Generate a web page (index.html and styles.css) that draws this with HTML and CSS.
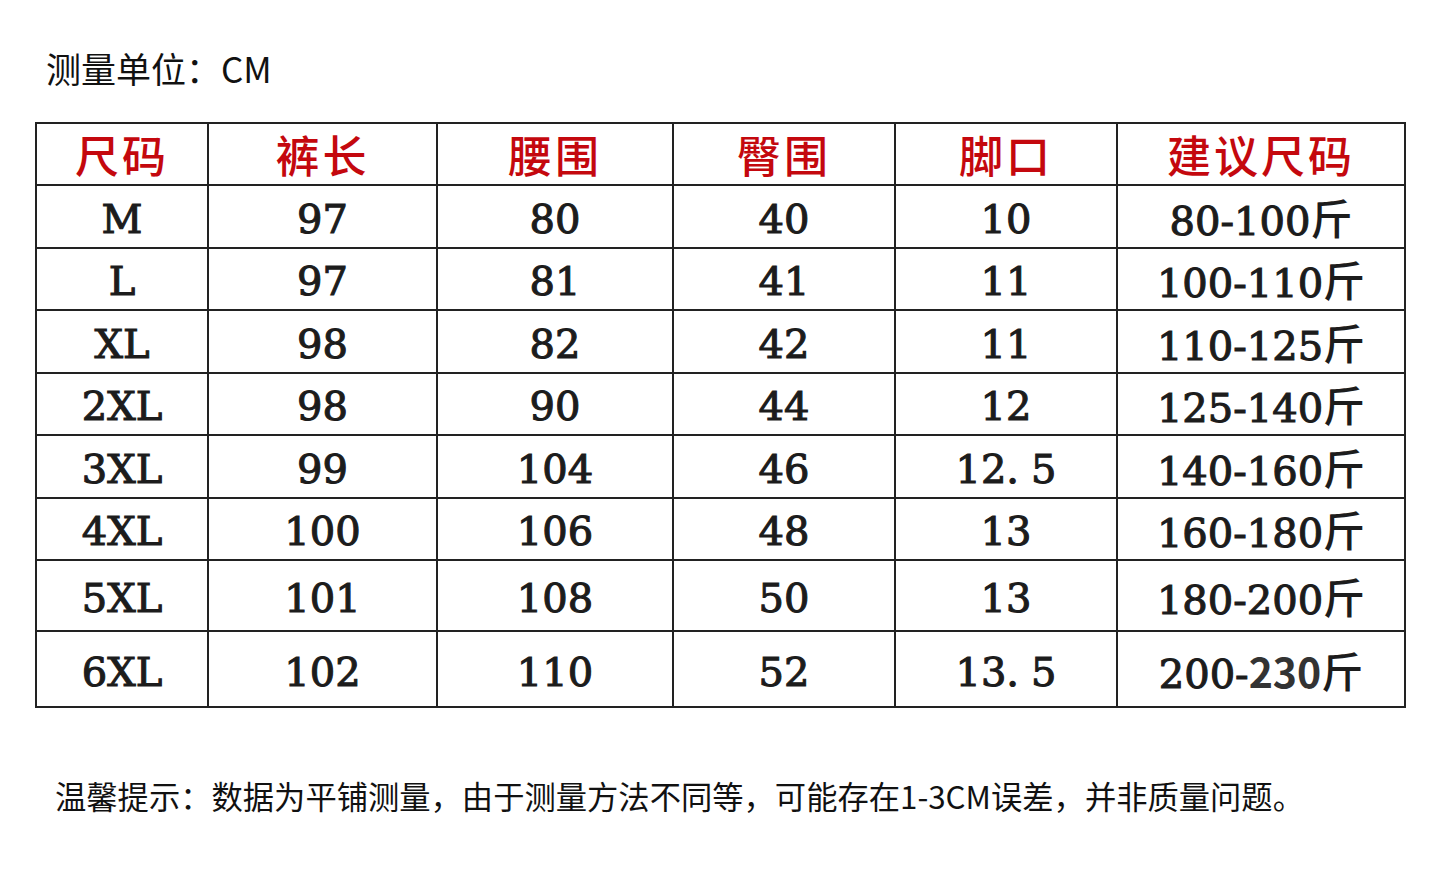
FILE: index.html
```html
<!DOCTYPE html>
<html lang="zh">
<head>
<meta charset="utf-8">
<title>尺码表</title>
<link rel="stylesheet" href="styles.css">
</head>
<body>
<div class="page">
  <h1 class="unit">测量单位：CM</h1>
  <table class="size-table">
    <colgroup>
      <col class="c1"><col class="c2"><col class="c3"><col class="c4"><col class="c5"><col class="c6">
    </colgroup>
    <thead>
      <tr class="head"><th>尺码</th><th>裤长</th><th>腰围</th><th>臀围</th><th>脚口</th><th>建议尺码</th></tr>
    </thead>
    <tbody>
      <tr><td>M</td><td>97</td><td>80</td><td>40</td><td>10</td><td>80-100<span class="jin">斤</span></td></tr>
      <tr><td>L</td><td>97</td><td>81</td><td>41</td><td>11</td><td>100-110<span class="jin">斤</span></td></tr>
      <tr><td>XL</td><td>98</td><td>82</td><td>42</td><td>11</td><td>110-125<span class="jin">斤</span></td></tr>
      <tr><td>2XL</td><td>98</td><td>90</td><td>44</td><td>12</td><td>125-140<span class="jin">斤</span></td></tr>
      <tr><td>3XL</td><td>99</td><td>104</td><td>46</td><td>12<span class="dot">.</span>5</td><td>140-160<span class="jin">斤</span></td></tr>
      <tr><td>4XL</td><td>100</td><td>106</td><td>48</td><td>13</td><td>160-180<span class="jin">斤</span></td></tr>
      <tr class="tall1"><td>5XL</td><td>101</td><td>108</td><td>50</td><td>13</td><td>180-200<span class="jin">斤</span></td></tr>
      <tr class="tall2"><td>6XL</td><td>102</td><td>110</td><td>52</td><td>13<span class="dot">.</span>5</td><td>200-<span class="sans">230</span><span class="jin">斤</span></td></tr>
    </tbody>
  </table>
  <p class="note">温馨提示：数据为平铺测量，由于测量方法不同等，可能存在1-3CM误差，并非质量问题。</p>
</div>
</body>
</html>
```

FILE: styles.css
```css
html, body {
  margin: 0;
  padding: 0;
  background: #ffffff;
}
.page {
  width: 1440px;
  height: 880px;
  box-sizing: border-box;
  padding: 46px 0 0 35px;
  font-family: "Noto Sans CJK SC", "Noto Sans", sans-serif;
  color: #111;
}
.unit {
  margin: 0 0 0 11px;
  font-size: 35px;
  font-weight: 400;
  line-height: 44px;
  height: 76px;
}
.size-table {
  border-collapse: collapse;
  width: 1369px;
  table-layout: fixed;
}
.c1 { width: 172px; }
.c2 { width: 229px; }
.c3 { width: 236px; }
.c4 { width: 222px; }
.c5 { width: 222px; }
.c6 { width: 288px; }
.size-table tr { height: 62.5px; }
.size-table tr.head { height: 62px; }
.size-table tr.tall1 { height: 71px; }
.size-table tr.tall2 { height: 76px; }
.size-table th,
.size-table td {
  border: 2px solid #222;
  padding: 0;
  text-align: center;
  vertical-align: middle;
}
.size-table th {
  color: #c4080e;
  font-family: "Noto Sans CJK SC", sans-serif;
  font-size: 44px;
  font-weight: 500;
  letter-spacing: 3px;
  line-height: 50px;
}
.size-table td {
  font-family: "DejaVu Serif", "Noto Sans CJK SC", serif;
  font-size: 40px;
  font-weight: 400;
  -webkit-text-stroke: 1.1px #1c1c1c;
  color: #1c1c1c;
  line-height: 44px;
  padding-top: 5px;
}
.size-table .jin {
  font-family: "Noto Sans CJK SC", sans-serif;
  font-weight: 500;
  font-size: 42px;
  -webkit-text-stroke: 0;
}
.size-table .dot {
  margin-right: 12px;
}
.size-table .sans {
  font-family: "Noto Sans CJK SC", sans-serif;
  font-weight: 700;
  font-size: 41px;
  -webkit-text-stroke: 0;
  color: #333;
}
.note {
  margin: 68px 0 0 20px;
  font-size: 31.3px;
  line-height: 40px;
  color: #111;
}
```
